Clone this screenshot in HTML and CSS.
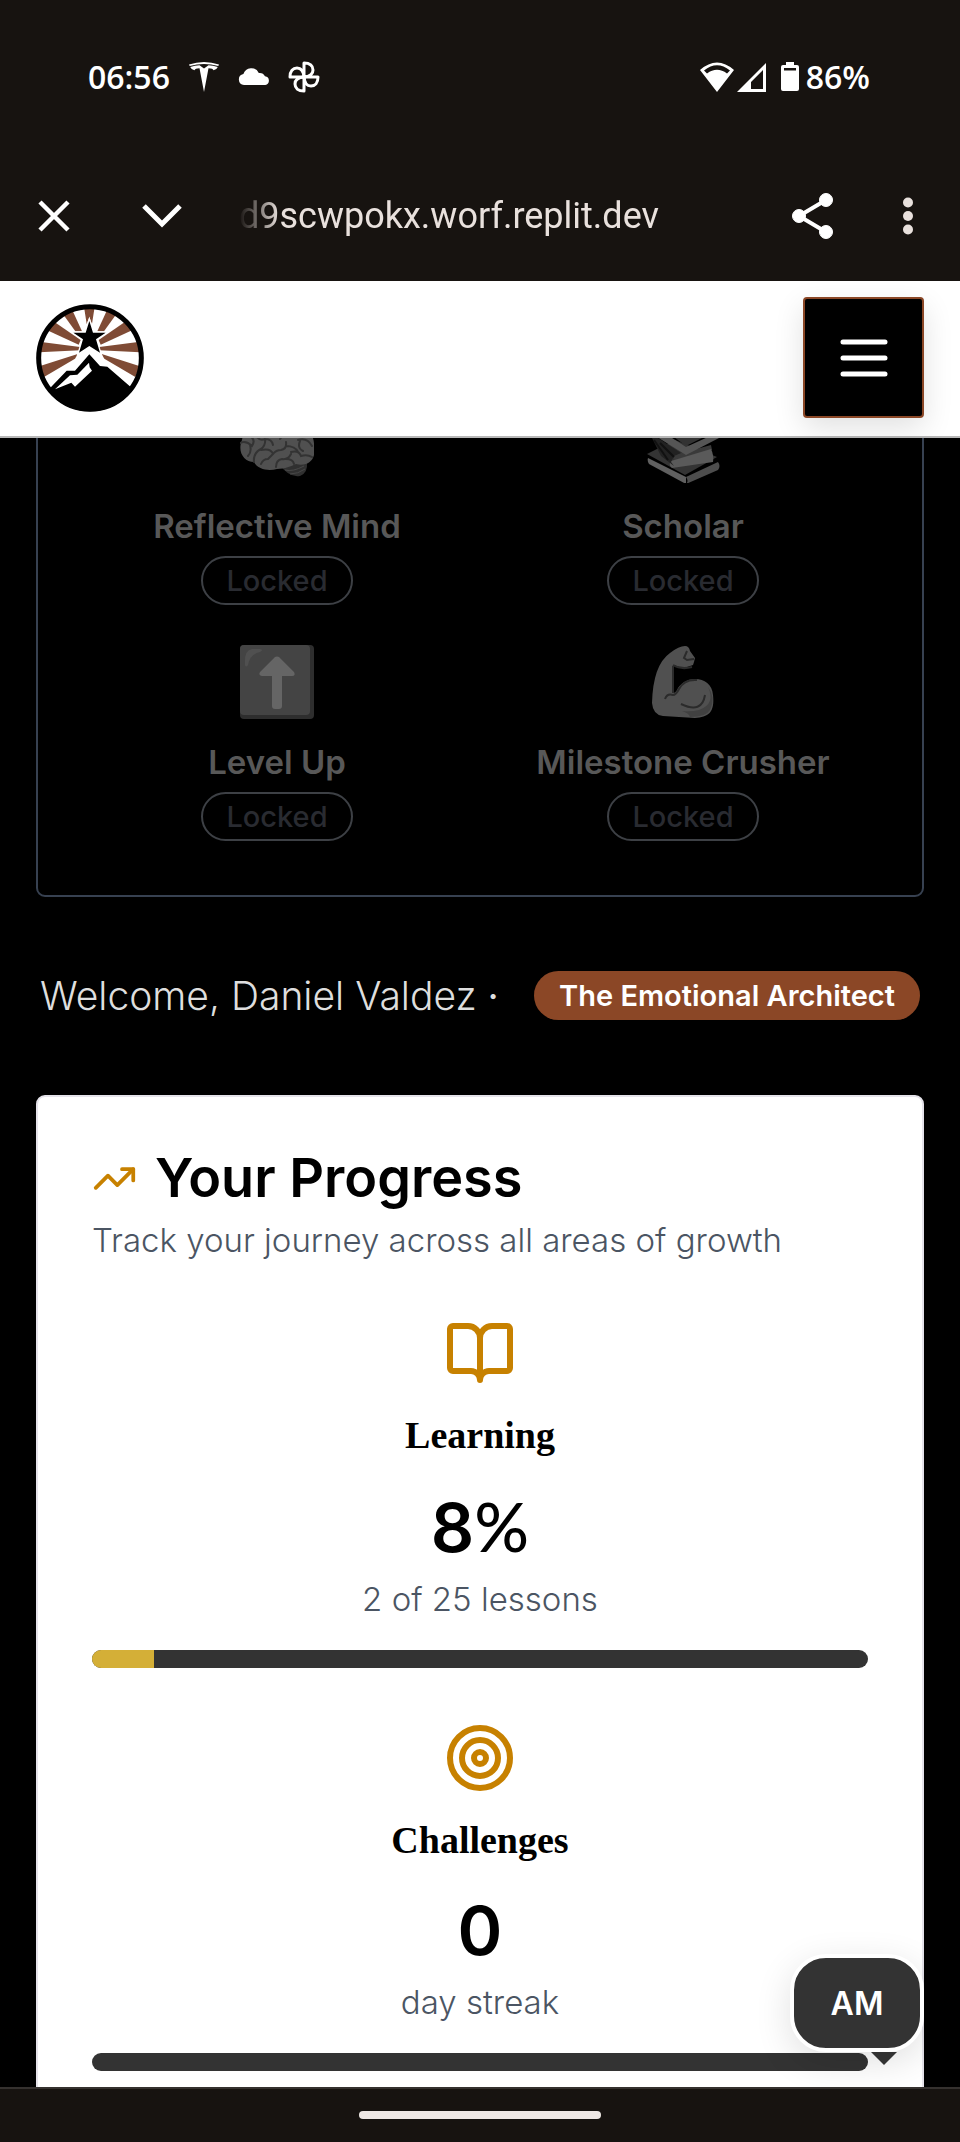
FILE: index.html
```html
<!DOCTYPE html>
<html lang="en">
<head>
<meta charset="utf-8">
<meta name="viewport" content="width=device-width, initial-scale=1">
<title>Your Progress</title>
<link rel="stylesheet" href="styles.css">
</head>
<body>
<div class="status-bar">
  <div class="status-group status-left">
    <span>06:56</span>
    <svg width="32" height="32" viewBox="0 0 32 32" fill="#fff" aria-hidden="true"><path d="M1 3.500Q16-1.500 31 3.500L30.300 5Q16 .8 1.700 5z"/><path d="M2.200 6Q7 4.300 11.500 4.200L16 7.500l4.500-3.300q4.500.1 9.300 1.800-1.300 3-4.300 3.300-.5-1.800-5-2L16 31 11.500 7.300q-4.500.2-5 2Q3.500 9 2.200 6z"/></svg>
    <svg width="32" height="32" viewBox="0 0 32 32" fill="#fff" aria-hidden="true"><path d="M6 24a5.500 5.500 0 0 1-.6-10.900A8.300 8.300 0 0 1 20.800 12 6 6 0 0 1 27 15.300 4.400 4.400 0 0 1 27.300 24z"/></svg>
    <svg width="32" height="32" viewBox="0 0 32 32" fill="none" stroke="#fff" stroke-width="3" stroke-linejoin="round" aria-hidden="true"><path id="petal" d="M16 16V2c6 0 9 3 9 7 0 4-3 6.500-9 7z"/><use href="#petal" transform="rotate(90 16 16)"/><use href="#petal" transform="rotate(180 16 16)"/><use href="#petal" transform="rotate(270 16 16)"/></svg>
  </div>
  <div class="status-group status-right">
    <svg width="34" height="30" viewBox="0 0 34 30" fill="#fff" aria-hidden="true"><path fill-rule="evenodd" d="M0 8Q17-7 34 8L17 30zM4 8.500L7 11.500Q17 4 27 11.500L30 8.500Q17-2 4 8.500z"/></svg>
    <svg width="29" height="29" viewBox="0 0 29 29" fill="#fff" aria-hidden="true"><path fill-rule="evenodd" d="M29 0v29H0zM26 7L14 19v7h12z"/></svg>
    <svg class="battery" width="18" height="30" viewBox="0 0 18 30" fill="#fff" aria-hidden="true"><path fill-rule="evenodd" d="M5 0h8v3h3q2 0 2 2v22q0 2-2 2H2q-2 0-2-2V5q0-2 2-2h3zM3 6v2.500h12V6z"/></svg>
    <span>86%</span>
  </div>
</div>

<div class="browser-bar">
  <button class="bar-button" aria-label="Close"><svg width="36" height="36" viewBox="0 0 36 36" fill="none" stroke="#fff" stroke-width="4.500"><path d="M4 4l28 28M32 4L4 32"/></svg></button>
  <button class="bar-button" aria-label="Minimise"><svg width="44" height="36" viewBox="0 0 44 36" fill="none" stroke="#fff" stroke-width="5"><path d="M4 8l18 18L40 8"/></svg></button>
  <div class="url"><span>d9scwpokx.worf.replit.dev</span></div>
  <button class="bar-button" aria-label="Share"><svg width="42" height="48" viewBox="0 0 42 48" fill="#fff" stroke="#fff"><path fill="none" stroke-width="4" d="M34 8L7 24l27 16"/><circle cx="34" cy="8" r="6.500"/><circle cx="7" cy="24" r="6.500"/><circle cx="34" cy="40" r="6.500"/></svg></button>
  <button class="bar-button" aria-label="More options"><svg width="12" height="40" viewBox="0 0 12 40" fill="#e9e1dd"><circle cx="6" cy="6.500" r="5"/><circle cx="6" cy="20" r="5"/><circle cx="6" cy="33.500" r="5"/></svg></button>
</div>

<header class="site-header">
  <a class="logo" href="#" aria-label="Home">
    <svg width="108" height="108" viewBox="0 0 324 324" aria-hidden="true">
      <defs><clipPath id="disc"><circle cx="162" cy="162" r="160"/></clipPath></defs>
      <circle cx="162" cy="162" r="160" fill="#fff"/>
      <g clip-path="url(#disc)">
        <g fill="#7f4b35">
          <path d="M144 8h32l-8 52-8-20-8 20z"/>
          <g id="rays"><path d="M78 26l28-14 32 70h-20z"/><path d="M50 50L32 78l96 44 6-14z"/><path d="M10 113v32l122-6v-10z"/><path d="M10 187l14 32 93-55 8-14z"/></g>
          <use href="#rays" transform="translate(322 0) scale(-1 1)"/>
        </g>
        <path d="M160 51l11 35h38l-29 20 12 40-32-20-31 20 12-40-29-20h37z" fill="#000" stroke="#fff" stroke-width="8" paint-order="stroke"/>
        <path d="M20 275l72-75h25l43-49 32 35 22 2 90 78v80H20z" fill="#000" stroke="#fff" stroke-width="26" paint-order="stroke"/>
        <path d="M57 256l45-42 22-2 35-36 2 14 7 10-51 48-11-12z" fill="#fff"/>
      </g>
      <circle cx="162" cy="162" r="154" fill="none" stroke="#000" stroke-width="15"/>
    </svg>
  </a>
  <button class="menu-button" aria-label="Open menu"><svg width="56" height="56" viewBox="0 0 56 56" stroke="#fff" stroke-width="5" stroke-linecap="round"><path d="M7 12h42M7 28h42M7 44h42"/></svg></button>
</header>

<main class="page">
  <section class="badges" aria-label="Achievements">
    <div class="badge">
      <svg class="badge-icon" viewBox="0 0 74 74" aria-hidden="true"><path d="M39 55q10 14 21 12 8-3 7-14z" fill="#303030"/><path d="M45 61q8 2 19-4M50 65q8 0 15-5" stroke="#484848" fill="none"/><path d="M37 5C20 4 4 17 2 31c-5 12 2 22 12 22 4 8 15 9 23 7 8 0 14-3 19-5 12 3 20-5 18-15C76 20 57 4 37 5z" fill="#505050"/><g fill="none" stroke="#333" stroke-width="2" stroke-linecap="round"><path d="M0 34q6-3 12 3 4-6-2-10M10 36q2 7-2 11M14 53q-1-9 7-13 5-4 4-10 7 0 8 6M25 30q-5 2-8-2M21 41q10-2 12 4l-5 5q-5 0-7 5M33 45q3-4 8-4 6-1 5-8M46 37q9 0 12 6M36 58q0-7 6-8 6 1 9-5M46 50q7 0 8 5M51 43q8-2 10 4 6-2 11 1M58 31q9-3 14 6M60 32q-3 7 3 10M40 30q4-6 10-3"/></g></svg>
      <h3 class="badge-name">Reflective Mind</h3>
      <span class="pill pill-locked">Locked</span>
    </div>
    <div class="badge">
      <svg class="badge-icon" viewBox="0 0 74 74" aria-hidden="true"><path d="M4 10l36-8 30 20-30 15z" fill="#333"/><path d="M1 45l28-14 42 17-32 18z" fill="#343434"/><path d="M2 49l38 19v7L3 55q-2-3-1-6z" fill="#606060"/><path d="M40 68l32-15q3 4 0 8L40 75q3-3 0-7z" fill="#4d4d4d"/><path d="M28 46l37-10 1 5-38 10z" fill="#3a3a3a"/><path d="M25 52l40-12q3 6 2 13L26 59q-4-3-1-7z" fill="#5a5a5a"/><path d="M3 23l12 24 13 10-3-4 3-6 7-3z" fill="#222"/><path d="M3 14l37 24 33-15v6L40 46 3 23z" fill="#555"/><path d="M8 31l14 20M14 34l14 14" stroke="#111" stroke-width="2" fill="none"/></svg>
      <h3 class="badge-name">Scholar</h3>
      <span class="pill pill-locked">Locked</span>
    </div>
    <div class="badge">
      <svg class="badge-icon" viewBox="0 0 74 74" aria-hidden="true"><rect width="74" height="74" rx="4" fill="#2e2e2e"/><rect width="70" height="70" rx="4" fill="#444"/><path d="M5 20q-1-15 7-16h8q4 1 0 3Q10 9 8 20q-2 3-3 0z" fill="#505050"/><path d="M35 12q2-1 4 0l15 15q2 4-2 4H42v30q0 3-3 3h-4q-3 0-3-3V31H22q-4-1-2-4z" fill="#656565"/></svg>
      <h3 class="badge-name">Level Up</h3>
      <span class="pill pill-locked">Locked</span>
    </div>
    <div class="badge">
      <svg class="badge-icon" viewBox="0 0 74 74" aria-hidden="true"><path d="M39 1q4 0 5 5l5 7-1 4-1 3-6 2q-4 2-13-2l-1 28q3 0 5-5c9-14 34-12 35 7 2 18-5 22-18 23l-32-2Q7 70 6 58 7 20 24 8q9-7 15-7z" fill="#505050"/><path d="M62 42q8 17-9 23-8 2-17 1 7 2 8 6 16 0 20-7 6-13-2-23z" fill="#414141"/><path d="M19 54q2-6 8-4 3 0 6-6 5-10 18-9M35 59q21 10 24-9M27 20q8 5 19 2M41 6l-3 7 3 2 7-1M27 21v27" fill="none" stroke="#2b2b2b" stroke-width="2"/></svg>
      <h3 class="badge-name">Milestone Crusher</h3>
      <span class="pill pill-locked">Locked</span>
    </div>
  </section>

  <div class="welcome">
    <p class="welcome-text">Welcome, Daniel Valdez <b>·</b></p>
    <span class="pill pill-title">The Emotional Architect</span>
  </div>

  <section class="progress">
    <div class="progress-head">
      <h2 class="progress-title">
        <svg width="45" height="45" viewBox="0 0 24 24" fill="none" stroke="#c78100" stroke-width="2" stroke-linecap="round" stroke-linejoin="round" aria-hidden="true"><path d="M22 7l-8.500 8.500-5-5L2 17"/><path d="M16 7h6v6"/></svg>
        Your Progress
      </h2>
      <p class="muted">Track your journey across all areas of growth</p>
    </div>
    <div class="stat">
      <svg class="stat-icon" viewBox="0 0 24 24" aria-hidden="true"><path d="M2 4a1 1 0 0 1 1-1h5a4 4 0 0 1 4 4 4 4 0 0 1 4-4h5a1 1 0 0 1 1 1v13a1 1 0 0 1-1 1h-6a3 3 0 0 0-3 3 3 3 0 0 0-3-3H3a1 1 0 0 1-1-1zM12 7v14"/></svg>
      <h3 class="stat-name">Learning</h3>
      <p class="stat-value">8<span class="percent">%</span></p>
      <p class="muted">2 of 25 lessons</p>
      <div class="track" role="progressbar" aria-label="Learning" aria-valuenow="8" aria-valuemin="0" aria-valuemax="100"><div class="fill" style="width: 8%"></div></div>
    </div>
    <div class="stat">
      <svg class="stat-icon" viewBox="0 0 24 24" aria-hidden="true"><circle cx="12" cy="12" r="10"/><circle cx="12" cy="12" r="6"/><circle cx="12" cy="12" r="2"/></svg>
      <h3 class="stat-name">Challenges</h3>
      <p class="stat-value">0</p>
      <p class="muted">day streak</p>
      <div class="track" role="progressbar" aria-label="Challenges" aria-valuenow="0" aria-valuemin="0" aria-valuemax="100"></div>
    </div>
  </section>

  <button class="chat-button">AM</button>
</main>

<footer class="system-nav"><span class="home-handle"></span></footer>
</body>
</html>
```
FILE: styles.css
```css
* {
  box-sizing: border-box;
}

body {
  display: flex;
  flex-direction: column;
  height: 100vh;
  margin: 0;
  overflow: hidden;
  background: #000;
  color: #000;
  font-family: Inter, "Open Sans", sans-serif;
}

h2, h3, p {
  margin: 0;
}

button {
  padding: 0;
  border: 0;
  background: none;
  font: inherit;
  cursor: pointer;
}

svg {
  display: block;
  flex: none;
}

/* Phone status bar */
.status-bar {
  display: flex;
  justify-content: space-between;
  padding: 57px 90px 58px 88px;
  background: #171310;
  color: #fff;
  font: 600 32px/40px "Open Sans", sans-serif;
}

.status-group {
  display: flex;
  align-items: center;
}

.status-left {
  gap: 18px;
}

.status-right {
  gap: 3px;
}

.battery {
  margin: 0 4px 0 12px;
}

/* In-app browser bar */
.browser-bar {
  display: flex;
  align-items: center;
  padding: 32px 46px 36px 36px;
  background: #171310;
}

.bar-button + .bar-button {
  margin-left: 68px;
}

.url {
  flex: 1;
  margin-left: 55px;
  color: #e9e1dd;
  font: 400 36px/58px Roboto, sans-serif;
  -webkit-mask-image: linear-gradient(to right, transparent, #000 40px);
  mask-image: linear-gradient(to right, transparent, #000 40px);
}

/* Site header */
.site-header {
  position: relative;
  display: flex;
  align-items: center;
  justify-content: space-between;
  padding: 16px 36px 18px;
  border-bottom: 2px solid #b8b8b8;
  background: #fff;
}

.menu-button {
  display: grid;
  place-items: center;
  width: 121px;
  height: 121px;
  border: 2px solid #8b4726;
  border-radius: 4px;
  background: #000;
  box-shadow: 0 10px 30px rgba(0, 0, 0, 0.12);
}

/* Page */
.page {
  position: relative;
  flex: 1;
  min-height: 0;
  padding: 0 36px;
  overflow: hidden;
}

.badges {
  display: grid;
  grid-template-columns: 1fr 1fr;
  gap: 36px;
  margin-top: -89px;
  padding: 54px;
  border: 2px solid #374151;
  border-radius: 9px;
}

.badge {
  display: flex;
  flex-direction: column;
  align-items: center;
}

.badge-icon {
  width: 74px;
  height: 74px;
  margin: 4px 0 21px;
}

.badge-name {
  margin-bottom: 8px;
  color: #585858;
  font-size: 33px;
  font-weight: 600;
  line-height: 44px;
  white-space: nowrap;
}

.pill {
  padding: 0 23px;
  border: 2px solid transparent;
  border-radius: 25px;
  font-size: 29px;
  font-weight: 600;
  line-height: 45px;
  white-space: nowrap;
}

.pill-locked {
  border-color: #3d4045;
  color: #292b31;
  font-weight: 500;
}

.pill-title {
  background: #8b4726;
  color: #fff;
}

.welcome {
  display: flex;
  align-items: center;
  justify-content: space-between;
  padding: 72px 4px 73px;
}

.welcome-text {
  color: #dedede;
  font-size: 39px;
  font-weight: 300;
  line-height: 53px;
  white-space: nowrap;
}

.progress {
  display: flex;
  flex-direction: column;
  gap: 54px;
  padding: 54px;
  border: 2px solid #e5e3ea;
  border-radius: 9px;
  background: #fff;
}

.progress-title {
  display: flex;
  align-items: center;
  gap: 18px;
  margin-bottom: 13px;
  font-size: 54px;
  font-weight: 600;
  line-height: 54px;
}

.muted {
  color: #4b5563;
  font-size: 33px;
  font-weight: 300;
  line-height: 45px;
}

.stat {
  display: flex;
  flex-direction: column;
  align-items: center;
}

.stat-icon {
  width: 72px;
  height: 72px;
  margin-bottom: 19px;
  fill: none;
  stroke: #c78100;
  stroke-width: 2;
  stroke-linecap: round;
  stroke-linejoin: round;
}

.stat-name {
  margin-bottom: 23px;
  font: 700 38px/54px "Liberation Serif", serif;
}

.stat-value {
  margin-bottom: 9px;
  font-size: 68px;
  font-weight: 600;
  line-height: 81px;
}

.percent {
  font-family: Lato, sans-serif;
  font-weight: 500;
}

.track {
  align-self: stretch;
  height: 18px;
  margin-top: 28px;
  overflow: hidden;
  border-radius: 9px;
  background: #333;
}

.fill {
  height: 100%;
  background: #d4af37;
}

.chat-button {
  position: absolute;
  right: 36px;
  bottom: 35px;
  width: 134px;
  height: 98px;
  border: 4px solid #fff;
  border-radius: 36px;
  background: #333;
  color: #fff;
  font-size: 32px;
  font-weight: 600;
  box-shadow: 0 10px 36px rgba(0, 0, 0, 0.12);
}

.chat-button::after {
  content: "";
  position: absolute;
  top: 94px;
  right: 23px;
  border: 13px solid transparent;
  border-top-color: #333;
  border-bottom: 0;
}

.system-nav {
  display: flex;
  justify-content: center;
  padding: 22px 0 23px;
  border-top: 2px solid #35312f;
  background: #171310;
}

.home-handle {
  width: 242px;
  height: 8px;
  border-radius: 4px;
  background: #efe8e5;
}
```
